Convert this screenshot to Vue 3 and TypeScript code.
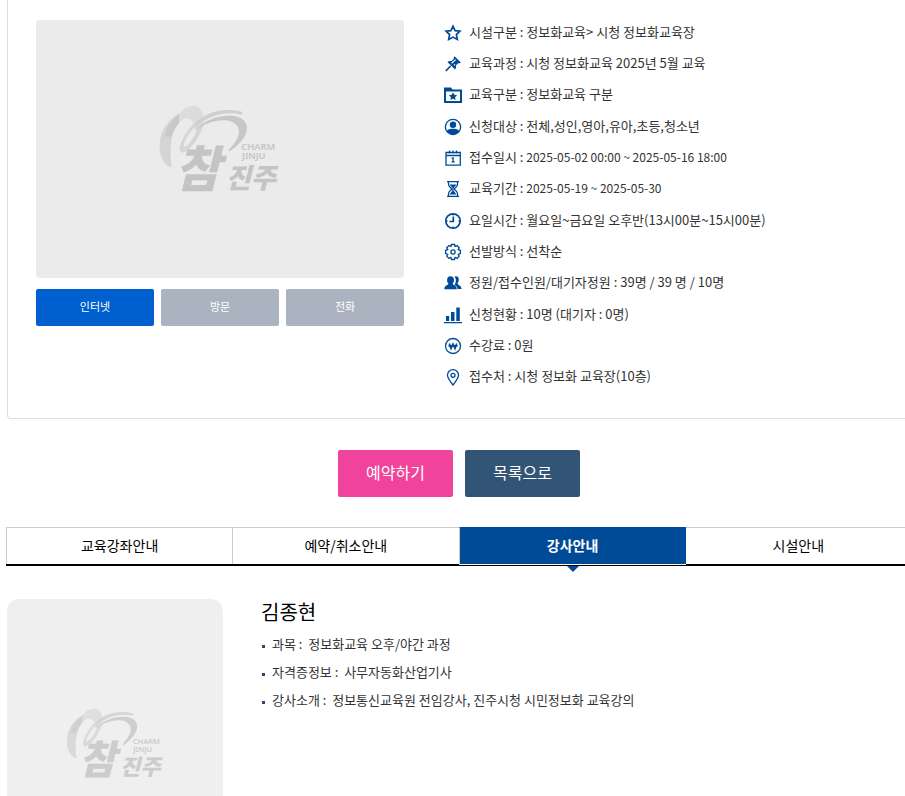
<script setup lang="ts">
import { defineComponent, h, ref } from 'vue'

interface InfoRow {
  icon: string
  label: string
  value: string
  compact?: boolean
}

const rows: InfoRow[] = [
  { icon: 'star', label: '시설구분', value: '정보화교육> 시청 정보화교육장' },
  { icon: 'pin', label: '교육과정', value: '시청 정보화교육 2025년 5월 교육' },
  { icon: 'folder', label: '교육구분', value: '정보화교육 구분' },
  { icon: 'user', label: '신청대상', value: '전체,성인,영아,유아,초등,청소년' },
  { icon: 'calendar', label: '접수일시', value: '2025-05-02 00:00 ~ 2025-05-16 18:00', compact: true },
  { icon: 'hourglass', label: '교육기간', value: '2025-05-19 ~ 2025-05-30', compact: true },
  { icon: 'clock', label: '요일시간', value: '월요일~금요일 오후반(13시00분~15시00분)' },
  { icon: 'gear', label: '선발방식', value: '선착순' },
  { icon: 'users', label: '정원/접수인원/대기자정원', value: '39명 / 39 명 / 10명' },
  { icon: 'chart', label: '신청현황', value: '10명 (대기자 : 0명)' },
  { icon: 'won', label: '수강료', value: '0원' },
  { icon: 'marker', label: '접수처', value: '시청 정보화 교육장(10층)' },
]

const methods = ['인터넷', '방문', '전화']
const method = ref('인터넷')

const tabs = ['교육강좌안내', '예약/취소안내', '강사안내', '시설안내']
const activeTab = ref('강사안내')

const teacher = [
  { label: '과목', value: '정보화교육 오후/야간 과정' },
  { label: '자격증정보', value: '사무자동화산업기사' },
  { label: '강사소개', value: '정보통신교육원 전임강사, 진주시청 시민정보화 교육강의' },
]

const CharmLogo = defineComponent({
  setup() {
    const cjk = "'Noto Sans CJK KR', sans-serif"
    return () =>
      h('svg', { viewBox: '30 35 354 264', role: 'img', 'aria-label': '참진주' }, [
        h('path', { fill: '#d4d4d4', d: 'M62 222C22 214 14 138 44 98C56 80 70 70 86 60L86 86C62 112 52 160 62 222Z' }),
        h('path', { fill: '#c8c8c8', d: 'M40 128C48 98 64 78 86 62L86 86C76 98 66 112 60 130Z' }),
        h('path', { fill: '#dcdcdc', d: 'M84 64C96 42 118 36 136 38C154 44 162 66 156 98L130 112C134 92 126 78 112 76C102 74 94 78 84 88Z' }),
        h('path', { fill: '#d5d5d5', d: 'M156 98C144 138 112 178 92 178C78 168 92 130 132 86L134 98C112 120 96 148 98 162C116 152 134 130 140 100Z' }),
        h('path', { fill: '#cfcfcf', d: 'M132 90C160 58 220 40 274 56L272 64C222 52 170 66 134 104Z' }),
        h('path', { fill: '#c7c7c7', d: 'M132 112C162 78 206 64 248 68C306 78 300 130 238 173C233 175 231 172 235 168C274 128 274 92 232 82C196 76 160 92 132 112Z' }),
        h('g', { fill: '#c4c4c4', style: { fontFamily: cjk } }, [
          h('text', { x: 72, y: 281, 'font-size': 148, 'font-weight': 900, 'font-style': 'italic' }, '참'),
          h('text', { x: 224, y: 285, 'font-size': 82, 'font-weight': 900, 'font-style': 'italic' }, '진주'),
        ]),
        h('g', { fill: '#c4c4c4', style: { fontFamily: "'Noto Sans', sans-serif" } }, [
          h('text', { x: 271, y: 171, 'font-size': 28, 'font-weight': 600 }, 'CHARM'),
          h('text', { x: 273, y: 198, 'font-size': 28, 'font-weight': 600 }, 'JINJU'),
        ]),
      ])
  },
})
</script>

<template>
  <div class="page">
    <main class="content">
      <section class="card">
        <div class="visual">
          <div class="thumb"><CharmLogo class="logo" /></div>
          <div class="methods">
            <button
              v-for="m in methods"
              :key="m"
              type="button"
              class="method"
              :class="{ on: m === method }"
              @click="method = m"
            >
              {{ m }}
            </button>
          </div>
        </div>

        <ul class="info">
          <li v-for="row in rows" :key="row.label">
            <svg class="icon" viewBox="0 0 18 18" aria-hidden="true">
              <path v-if="row.icon === 'star'" class="line" d="M9 2.2l2.1 4.4 4.8.6-3.5 3.4.9 4.8L9 13.1l-4.3 2.3.9-4.8L2.1 7.2l4.8-.6z" />
              <g v-else-if="row.icon === 'pin'">
                <path d="M10.6 1.2l6.2 6.2-1.5 1-1-.3-2.4 2.4c.4 1.6.1 3-.9 4.1L3.400 7c1.100-1 2.600-1.300 4.100-.9l2.400-2.400-.3-1z" />
                <path class="line" d="M6.600 11L1.800 16" />
                <path class="cut" d="M7.600 8.200l4-3.600M10 10.400l1-1" />
              </g>
              <g v-else-if="row.icon === 'folder'">
                <path fill-rule="evenodd" d="M0 1.500h7l1.500 2H18V17H0zM2 5.500V15h14V5.500z" />
                <path d="M9 6.300l1.300 2.500 2.800.4-2 2 .5 2.900L9 12.700l-2.600 1.400.5-2.900-2-2 2.800-.4z" />
              </g>
              <g v-else-if="row.icon === 'user'">
                <circle class="line thin" cx="9" cy="9" r="7.600" />
                <circle cx="9" cy="6.800" r="3.200" />
                <path d="M2.700 13c1.300-1.900 3.400-2.200 6.300-2.200s5 .3 6.300 2.200c-1.300 2.200-3.600 3.500-6.300 3.500S4 15.200 2.700 13z" />
              </g>
              <g v-else-if="row.icon === 'calendar'">
                <path class="line thin" d="M2 3.500h14.300v12.700H2zM2 6.500h14.300M5.500 1.500v3M9 1.500v3M12.500 1.500v3" />
                <path d="M8.500 8.300h1.300v4h1v1.200H7.500v-1.200h1V9.800h-1V9z" />
              </g>
              <g v-else-if="row.icon === 'hourglass'">
                <path class="line thin" d="M3 1.700h12M3 16.300h12M4.500 2v2.500c0 2 2.200 3 3.500 4.500-1.300 1.500-3.500 2.500-3.500 4.500V16M13.500 2v2.500c0 2-2.200 3-3.500 4.500 1.300 1.500 3.500 2.500 3.500 4.500V16" />
                <path d="M5.500 4.500h7L9.500 8v2.500l3 4h-7l3-4V8z" />
              </g>
              <g v-else-if="row.icon === 'clock'">
                <circle class="line" cx="9" cy="9" r="7.200" />
                <path class="line" d="M9.300 4.500v5H5.500" />
                <path class="line thin" d="M9 2v1.500M9 14.500V16M2 9h1.500M14.500 9H16" />
              </g>
              <g v-else-if="row.icon === 'gear'">
                <path class="line thin" d="M7.500 1.500h3l.6 2 1.900-1 2.200 2.200-1 1.900 2.200.7v3.200l-2.200.8 1 1.900-2.200 2.200-1.900-1-.7 2.100H7.600l-.7-2.100-1.900 1-2.200-2.200 1-1.900-2.200-.8V7.300l2.200-.7-1-1.900L5 2.500l1.900 1z" />
                <circle class="line thin" cx="9" cy="9" r="2.100" />
              </g>
              <g v-else-if="row.icon === 'users'">
                <path d="M10.500 2.500c3-.9 4.600 1 4.300 3.700-.1 1.500-.8 2.400-1.300 3.300.2 1.700 3.800 1.600 4.100 5.500h-4c-.2-2.300-1.700-3.200-3.300-3.900 1.900-2.300 2.200-6.200.2-8.600z" />
                <path d="M6.500 2.200c2.500 0 3.700 1.700 3.500 4.200-.1 1.500-.7 2.400-1.300 3.200.2 2 4 1.600 4.200 5.700H.3c.2-4.100 3.900-3.700 4.100-5.700-.7-.8-1.300-1.700-1.300-3.200-.2-2.500 1-4.200 3.400-4.200z" />
              </g>
              <path v-else-if="row.icon === 'chart'" d="M2 10h3.200v5H2zM7 6h3.500v9H7zM12.300 1.500h3.500V15h-3.500zM0 16h18v1.200H0z" />
              <g v-else-if="row.icon === 'won'">
                <circle class="line thin" cx="9" cy="9" r="7.500" />
                <path class="line" d="M5.300 6.500L7 11.500l2-4.500 2 4.500 1.700-5M4.500 8.800h9" />
              </g>
              <g v-else>
                <path class="line thin" d="M9 17C5.600 12.700 3.500 9.900 3.500 7.200a5.500 5.500 0 0 1 11 0C14.500 9.900 12.400 12.700 9 17z" />
                <circle class="line thin" cx="9" cy="7.300" r="2" />
              </g>
            </svg>
            <span>{{ row.label }} : <span :class="{ compact: row.compact }">{{ row.value }}</span></span>
          </li>
        </ul>
      </section>

      <div class="actions">
        <button type="button" class="action reserve">예약하기</button>
        <button type="button" class="action list">목록으로</button>
      </div>

      <nav class="tabs">
        <a
          v-for="t in tabs"
          :key="t"
          href="#"
          :class="{ active: t === activeTab }"
          @click.prevent="activeTab = t"
        >{{ t }}</a>
      </nav>

      <section class="teacher">
        <div class="photo"><CharmLogo class="logo" /></div>
        <div class="profile">
          <h2>김종현</h2>
          <ul>
            <li v-for="item in teacher" :key="item.label">
              {{ item.label }} :&nbsp; {{ item.value }}
            </li>
          </ul>
        </div>
      </section>
    </main>
  </div>
</template>

<style>
body {
  background: #fff;
}
</style>

<style scoped>
.page {
  overflow: hidden;
  color: #333;
  font: 13px/20px 'Noto Sans CJK KR', sans-serif;
}

.content {
  margin: 0 -6px 0 7px;
}

ul {
  margin: 0;
  padding: 0;
  list-style: none;
}

button {
  padding: 0 0 3px;
  border: 0;
  border-radius: 2px;
  color: #fff;
  font-family: inherit;
  cursor: pointer;
}

.card {
  display: flex;
  gap: 40px;
  padding: 16px 28px 26px;
  border: 1px solid #ddd;
  border-top: 0;
  border-radius: 0 0 4px 4px;
}

.visual {
  flex: 0 0 368px;
  padding-top: 4px;
}

.thumb,
.photo {
  display: flex;
  align-items: center;
  justify-content: center;
}

.thumb {
  height: 258px;
  border-radius: 4px;
  background: #ebebeb;
}

.logo {
  overflow: visible;
}

.thumb .logo {
  width: 118px;
}

.methods {
  display: grid;
  grid-template-columns: repeat(3, 1fr);
  gap: 7px;
  margin-top: 11px;
}

.method {
  height: 37px;
  background: #abb3c0;
  font-size: 11px;
}

.method.on {
  background: #0060cf;
}

.info {
  display: grid;
  flex: 1;
  grid-auto-rows: 1fr;
  min-height: 376px;
}

.info li {
  display: flex;
  align-items: center;
  gap: 7px;
  white-space: nowrap;
}

.compact {
  font-size: 12px;
}

.icon {
  flex: none;
  width: 18px;
  height: 18px;
  margin-top: 2px;
  fill: #004b97;
}

.line {
  fill: none;
  stroke: #004b97;
  stroke-width: 1.7;
}

.line.thin {
  stroke-width: 1.3;
}

.cut {
  fill: none;
  stroke: #fff;
  stroke-width: 1.2;
}

.actions {
  display: flex;
  justify-content: center;
  gap: 12px;
  margin: 31px 0 30px;
}

.action {
  width: 115px;
  height: 47px;
  font-size: 16px;
}

.reserve {
  background: #f0439b;
}

.list {
  background: #325576;
}

.tabs {
  display: grid;
  grid-template-columns: repeat(4, 1fr);
  margin-left: -1px;
  border-bottom: 2px solid #000;
}

.tabs a {
  position: relative;
  padding-bottom: 2px;
  border: 1px solid #ccc;
  border-width: 1px 0 0 1px;
  color: #000;
  font-size: 14px;
  line-height: 34px;
  text-align: center;
  text-decoration: none;
}

.tabs .active {
  z-index: 1;
  margin: 0 -1px -1px 0;
  border-top-color: #004b97;
  border-bottom: 1px solid #fff;
  background: #004b97;
  color: #fff;
  font-weight: 700;
}

.tabs .active::after {
  position: absolute;
  top: 100%;
  left: 50%;
  margin: 2px 0 0 -6px;
  border: 6px solid transparent;
  border-top-color: #004b97;
  border-bottom: 0;
  content: '';
}

.teacher {
  display: flex;
  gap: 38px;
  margin-top: 33px;
}

.photo {
  flex: 0 0 216px;
  height: 288px;
  border-radius: 12px;
  background: #efefef;
}

.photo .logo {
  width: 95px;
  opacity: 0.8;
}

h2 {
  margin: 0 0 5px;
  color: #000;
  font-size: 20px;
  font-weight: 400;
  line-height: 26px;
}

.profile li {
  display: flex;
  align-items: center;
  gap: 7px;
  line-height: 28px;
}

.profile li::before {
  width: 3px;
  height: 3px;
  margin: 4px 0 0 1px;
  background: #2f4468;
  content: '';
}
</style>
